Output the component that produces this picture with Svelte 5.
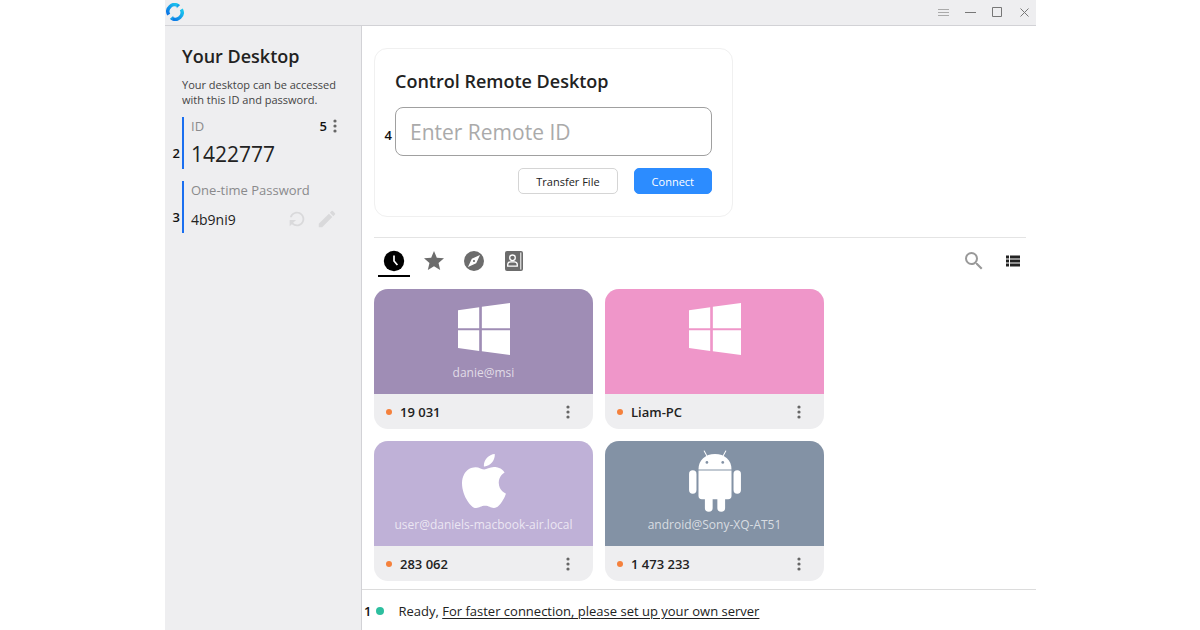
<script lang="ts">
	type Peer = {
		name: string;
		user: string;
		platform: 'windows' | 'mac' | 'android';
		color: string;
	};

	const peers: Peer[] = [
		{ name: '19 031', user: 'danie@msi', platform: 'windows', color: '#9f8db5' },
		{ name: 'Liam-PC', user: '', platform: 'windows', color: '#ef96c9' },
		{ name: '283 062', user: 'user@daniels-macbook-air.local', platform: 'mac', color: '#bfb1d7' },
		{ name: '1 473 233', user: 'android@Sony-XQ-AT51', platform: 'android', color: '#8392a5' }
	];

	const tabs = ['Recent sessions', 'Favorites', 'Discovered', 'Address book'];

	let activeTab = $state(0);
	let remoteId = $state('');
</script>

<svelte:head>
	<title>RustDesk</title>
</svelte:head>

{#snippet dots()}
	<svg class="dots" width="4" height="14" viewBox="0 0 4 14" aria-hidden="true">
		<circle cx="2" cy="2" r="1.6" />
		<circle cx="2" cy="7" r="1.6" />
		<circle cx="2" cy="12" r="1.6" />
	</svg>
{/snippet}

<div class="window">
	<header class="titlebar">
		<svg width="18" height="18" viewBox="0 0 18 18" role="img" aria-label="RustDesk">
			<defs>
				<linearGradient id="ring" x1="0" y1="1" x2="1" y2="0">
					<stop offset="0" stop-color="#0a74e6" />
					<stop offset="1" stop-color="#1cc8ee" />
				</linearGradient>
			</defs>
			<g fill="none" stroke="url(#ring)" stroke-width="3.4">
				<path d="M12.4 2.9A6.7 6.7 0 0 0 2.7 11.6" />
				<path d="M5.6 15.1A6.7 6.7 0 0 0 15.3 6.4" />
			</g>
			<path d="M10.6 5.2L14.2 2L11.4 1zM7.4 12.8L3.8 16L6.6 17z" fill="#159fe9" />
		</svg>
		<div class="window-controls">
			<button aria-label="Menu" class="faint">
				<svg width="11" height="11" viewBox="0 0 11 11"><path d="M0 2.5h11M0 5.5h11M0 8.5h11" /></svg>
			</button>
			<button aria-label="Minimize">
				<svg width="11" height="11" viewBox="0 0 11 11"><path d="M0 5.5h11" /></svg>
			</button>
			<button aria-label="Maximize">
				<svg width="11" height="11" viewBox="0 0 11 11"><path d="M.5 .5h9v9h-9z" /></svg>
			</button>
			<button aria-label="Close">
				<svg width="11" height="11" viewBox="0 0 11 11"><path d="M1.5 1.5l8 8M9.5 1.5l-8 8" /></svg>
			</button>
		</div>
	</header>

	<div class="body">
		<aside class="sidebar">
			<h1>Your Desktop</h1>
			<p>Your desktop can be accessed with this ID and password.</p>

			<section class="field">
				<span class="marker">2</span>
				<div class="field-row">
					<h2>ID</h2>
					<div class="field-menu">
						<b>5</b>
						<button aria-label="ID options">{@render dots()}</button>
					</div>
				</div>
				<div class="id-value">1422777</div>
			</section>

			<section class="field">
				<span class="marker">3</span>
				<h2>One-time Password</h2>
				<div class="field-row password">
					<span>4b9ni9</span>
					<div class="actions">
						<button aria-label="Refresh password">
							<svg width="22" height="22" viewBox="0 0 24 24">
								<path transform="rotate(180 12 12)" d="M17.65 6.35A7.958 7.958 0 0 0 12 4c-4.42 0-7.99 3.58-7.99 8s3.57 8 7.99 8c3.73 0 6.84-2.55 7.73-6h-2.08A5.99 5.99 0 0 1 12 18c-3.31 0-6-2.69-6-6s2.69-6 6-6c1.66 0 3.14.69 4.22 1.78L13 11h7V4l-2.35 2.35z" />
							</svg>
						</button>
						<button aria-label="Change password">
							<svg width="22" height="22" viewBox="0 0 24 24">
								<path d="M3 17.25V21h3.75L17.81 9.94l-3.75-3.75L3 17.25zM20.71 7.04a1 1 0 0 0 0-1.41l-2.34-2.34a1 1 0 0 0-1.41 0l-1.83 1.83 3.75 3.75 1.83-1.83z" />
							</svg>
						</button>
					</div>
				</div>
			</section>
		</aside>

		<div class="content">
			<main>
				<form class="connect" onsubmit={(e) => e.preventDefault()}>
					<label for="remote-id">Control Remote Desktop</label>
					<div class="remote">
						<span class="marker">4</span>
						<input id="remote-id" placeholder="Enter Remote ID" autocomplete="off" bind:value={remoteId} />
					</div>
					<div class="buttons">
						<button type="button" class="transfer">Transfer File</button>
						<button class="primary">Connect</button>
					</div>
				</form>

				<nav class="toolbar">
					{#each tabs as tab, i}
						<button class="tab" class:active={activeTab === i} aria-label={tab} onclick={() => (activeTab = i)}>
							<svg width="24" height="24" viewBox="0 0 24 24">
								{#if i === 0}
									<circle cx="12" cy="12" r="10.2" />
									<path d="M12 6.5V12l3.4 4" fill="none" stroke="#fff" stroke-width="1.7" />
								{:else if i === 1}
									<path d="M12 17.27L18.18 21l-1.64-7.03L22 9.24l-7.19-.61L12 2 9.19 8.63 2 9.24l5.46 4.73L5.82 21z" />
								{:else if i === 2}
									<path d="M12 10.9a1.1 1.1 0 1 0 0 2.2 1.1 1.1 0 0 0 0-2.2zM12 2a10 10 0 1 0 0 20 10 10 0 0 0 0-20zm2.19 12.19L6 18l3.81-8.19L18 6l-3.81 8.19z" />
								{:else}
									<rect x="3" y="2" width="18" height="20" rx="2" />
									<g fill="none" stroke="#fff" stroke-width="1.3">
										<circle cx="10.5" cy="8.8" r="2.8" />
										<path d="M5.7 17.2v-1.4q0-3 3-3h3.6q3 0 3 3v1.4z" />
										<path d="M18.8 3.5v17" stroke-width="1" />
									</g>
								{/if}
							</svg>
						</button>
					{/each}
					<div class="tools">
						<button aria-label="Search" class="search">
							<svg width="24" height="24" viewBox="0 0 24 24">
								<path d="M15.5 14h-.79l-.28-.27A6.471 6.471 0 0 0 16 9.5 6.5 6.5 0 1 0 9.5 16c1.61 0 3.09-.59 4.23-1.57l.27.28v.79l5 4.99L20.49 19l-4.99-5zm-6 0C7.01 14 5 11.99 5 9.5S7.01 5 9.5 5 14 7.01 14 9.5 11.99 14 9.5 14z" />
							</svg>
						</button>
						<button aria-label="List view">
							<svg width="14" height="12" viewBox="0 0 14 12">
								<path d="M0 .5h3v3H0zM4 .5h10v3H4zM0 4.5h3v3H0zM4 4.5h10v3H4zM0 8.5h3v3H0zM4 8.5h10v3H4z" />
							</svg>
						</button>
					</div>
				</nav>

				<div class="peers">
					{#each peers as peer}
						<article class="peer">
							<div class="preview" style:background={peer.color}>
								{#if peer.platform === 'windows'}
									<svg width="52" height="52" viewBox="0 0 157 157">
										<path d="M0 22l64-9v63H0zM72 11l85-11v76H72zM0 82h64v63l-64-9zM72 82h85v75l-85-11z" />
									</svg>
								{:else if peer.platform === 'mac'}
									<svg width="54" height="54" viewBox="0 0 24 24">
										<path d="M12.152 6.896c-.948 0-2.415-1.078-3.96-1.04-2.04.027-3.91 1.183-4.961 3.014-2.117 3.675-.546 9.103 1.519 12.09 1.013 1.454 2.208 3.09 3.792 3.039 1.52-.065 2.09-.987 3.935-.987 1.831 0 2.35.987 3.96.948 1.637-.026 2.676-1.48 3.676-2.948 1.156-1.688 1.636-3.325 1.662-3.415-.039-.013-3.182-1.221-3.22-4.857-.026-3.04 2.48-4.494 2.597-4.559-1.429-2.09-3.623-2.324-4.39-2.376-2-.156-3.675 1.09-4.61 1.09zM15.53 3.83c.843-1.012 1.4-2.427 1.245-3.83-1.207.052-2.662.805-3.532 1.818-.78.896-1.454 2.338-1.273 3.714 1.338.104 2.715-.688 3.559-1.701" />
									</svg>
								{:else}
									<svg width="52" height="62" viewBox="0 0 154 184">
										<path d="M45 3l8 15M109 3l-8 15" stroke="#fff" stroke-width="3" stroke-linecap="round" />
										<path d="M28 58C28 30 48 12 77 12s49 18 49 46z" />
										<circle cx="53" cy="37" r="4" fill={peer.color} />
										<circle cx="100" cy="37" r="4" fill={peer.color} />
										<path d="M28 61h98v75q0 10-10 10H38q-10 0-10-10z" />
										<rect x="0" y="60" width="22" height="70" rx="11" />
										<rect x="132" y="60" width="22" height="70" rx="11" />
										<path d="M47 140h23v32a11 11 0 0 1-23 0zM84 140h23v32a11 11 0 0 1-23 0z" />
									</svg>
								{/if}
								<span>{peer.user}</span>
							</div>
							<footer>
								<i></i>
								<strong>{peer.name}</strong>
								<button aria-label="Options for {peer.name}">{@render dots()}</button>
							</footer>
						</article>
					{/each}
				</div>
			</main>

			<div class="statusbar">
				<b>1</b>
				<i></i>
				<span>Ready, <a href="#server">For faster connection, please set up your own server</a></span>
			</div>
		</div>
	</div>
</div>

<style>
	:global(body) {
		background: #fff;
	}

	.window {
		box-sizing: border-box;
		display: flex;
		flex-direction: column;
		min-height: 100vh;
		margin: 0 164px 0 165px;
		font-family: 'Open Sans', 'Noto Sans', sans-serif;
		font-size: 13px;
		color: #222;
	}

	button {
		display: flex;
		align-items: center;
		justify-content: center;
		padding: 0;
		border: 0;
		background: none;
		font: inherit;
		color: inherit;
		cursor: pointer;
	}

	svg {
		display: block;
		fill: currentColor;
	}

	.titlebar {
		display: flex;
		align-items: center;
		justify-content: space-between;
		height: 25px;
		padding: 0 6px 0 1px;
		border-bottom: 1px solid #d2d2d6;
		background: #eeeef0;
	}

	.titlebar > svg {
		margin-bottom: 2px;
	}

	.window-controls {
		display: flex;
		gap: 16px;
	}

	.window-controls svg {
		fill: none;
		stroke: #777;
	}

	.window-controls .faint svg {
		stroke: #aaa;
	}

	.body {
		display: flex;
		flex: 1;
	}

	.sidebar {
		flex: none;
		box-sizing: border-box;
		width: 197px;
		padding: 18px 16px 0 17px;
		border-right: 1px solid #d2d2d6;
		background: #eeeef0;
	}

	h1,
	.connect label {
		margin: 0;
		font-size: 18px;
		font-weight: 600;
		line-height: 24px;
		white-space: nowrap;
	}

	.sidebar p {
		margin: 9px 0 10px;
		font-size: 11px;
		line-height: 15px;
		color: #444;
	}

	.field {
		position: relative;
		height: 52px;
		margin-bottom: 12px;
		padding-left: 7px;
		border-left: 2px solid #1a6ff0;
	}

	.field h2 {
		margin: 0;
		font-size: 13px;
		font-weight: 400;
		line-height: 18px;
		color: #8a8a8c;
		white-space: nowrap;
	}

	.field-row {
		display: flex;
		align-items: center;
		justify-content: space-between;
	}

	.field-menu {
		display: flex;
		align-items: center;
		gap: 6px;
		padding-right: 8px;
		line-height: 16px;
	}

	b,
	.marker {
		font-size: 13px;
		font-weight: 600;
		color: #111;
	}

	.marker {
		position: absolute;
		top: 50%;
		right: 100%;
		margin-right: 4px;
		line-height: 18px;
		transform: translateY(-50%);
	}

	.field .marker {
		top: 36px;
	}

	.dots {
		color: #666;
	}

	.id-value {
		font-size: 21px;
		line-height: 38px;
	}

	.password {
		height: 40px;
		font-size: 14px;
	}

	.actions {
		display: flex;
		gap: 8px;
		padding-right: 7px;
		color: #d9d9db;
	}

	.content {
		display: flex;
		flex: 1;
		flex-direction: column;
		min-width: 0;
		background: #fff;
	}

	main {
		flex: 1;
		padding: 22px 10px 8px 12px;
	}

	.connect {
		box-sizing: border-box;
		max-width: 359px;
		margin-bottom: 20px;
		padding: 20px 20px 22px;
		border: 1px solid #f0f0f0;
		border-radius: 13px;
	}

	.connect label {
		display: block;
	}

	.remote {
		position: relative;
		margin: 14px 0 12px;
	}

	.remote input {
		box-sizing: border-box;
		display: block;
		width: 100%;
		height: 49px;
		padding: 0 14px;
		border: 1px solid #a0a0a0;
		border-radius: 8px;
		outline: none;
		background: #fff;
		font: inherit;
		font-size: 21px;
		color: #222;
	}

	.remote input::placeholder {
		color: #aaa;
		opacity: 1;
	}

	.remote .marker {
		top: 28px;
		margin-right: 3px;
	}

	.buttons {
		display: flex;
		justify-content: flex-end;
		gap: 16px;
	}

	.buttons button {
		box-sizing: border-box;
		height: 26px;
		padding: 0 17px;
		border: 1px solid #2c8cff;
		border-radius: 5px;
		font-size: 11px;
	}

	.buttons .transfer {
		border-color: #d5d5d5;
	}

	.buttons .primary {
		background: #2c8cff;
		color: #fff;
	}

	.toolbar {
		display: flex;
		align-items: flex-start;
		gap: 8px;
		margin-bottom: 12px;
		padding: 11px 4px 0;
		border-top: 1px solid #e4e4e4;
	}

	.tab {
		width: 32px;
		padding: 0 0 2px;
		border-bottom: 2px solid transparent;
		color: #6c6c6c;
	}

	.tab.active {
		border-color: #000;
		color: #000;
	}

	.tools {
		display: flex;
		gap: 20px;
		margin-left: auto;
		padding-right: 2px;
	}

	.search {
		color: #999;
	}

	.peers {
		display: grid;
		grid-template-columns: repeat(auto-fill, 219px);
		gap: 12px;
	}

	.peer {
		overflow: hidden;
		border-radius: 14px;
		background: #eeeef0;
	}

	.preview {
		display: grid;
		grid-template-rows: 70px 18px;
		place-items: center;
		padding: 5px 0 12px;
		color: #fff;
	}

	.preview span {
		font-size: 12px;
		line-height: 18px;
		color: rgba(255, 255, 255, 0.7);
	}

	.peer footer {
		display: flex;
		align-items: center;
		height: 35px;
		padding: 0 23px 0 12px;
	}

	.peer i {
		width: 6px;
		height: 6px;
		margin-right: 8px;
		border-radius: 50%;
		background: #f5813c;
	}

	.peer strong {
		flex: 1;
		font-weight: 600;
	}

	.statusbar {
		display: flex;
		align-items: center;
		box-sizing: border-box;
		height: 41px;
		padding: 2px 2px 0;
		border-top: 1px solid #dcdcdc;
		line-height: 20px;
	}

	.statusbar i {
		width: 8px;
		height: 8px;
		margin: 0 14px 0 5px;
		border-radius: 50%;
		background: #2dbf9f;
	}

	.statusbar a {
		color: inherit;
		text-underline-offset: 2px;
	}
</style>
